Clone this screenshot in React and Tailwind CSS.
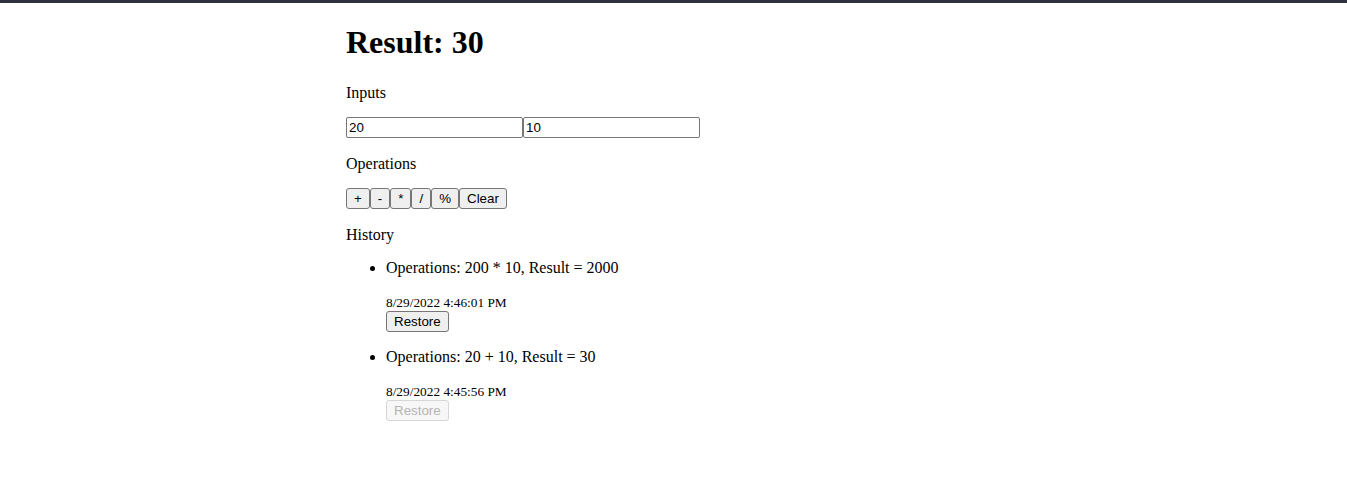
const history = [
  { a: 200, op: '*', b: 10, result: 2000, time: '8/29/2022 4:46:01 PM', current: false },
  { a: 20, op: '+', b: 10, result: 30, time: '8/29/2022 4:45:56 PM', current: true },
];

const ops = ['+', '-', '*', '/', '%', 'Clear'];

const btn =
  "font-['Liberation_Sans',Arial,sans-serif] text-[13.33px] leading-[15px] px-[7px] py-[2px] h-[21px] bg-[#efefef] border border-[#767676] rounded-[3px] text-black";

export default function App() {
  return (
    <div className="min-h-screen bg-white text-black font-['Liberation_Serif','Times_New_Roman',serif] text-base">
      <div className="h-[3px] bg-[#2d323e]" />
      <div className="w-[655px] mx-auto">
        <h1 className="text-[32px] font-bold leading-[37px] mt-[21px] mb-[23px]">Result: 30</h1>
        <p className="leading-[18px] mb-[15px]">Inputs</p>
        <div className="flex">
          <input
            type="text"
            defaultValue="20"
            className="w-[177px] h-[21px] border border-[#767676] rounded-[2px] px-[2px] text-[13.33px] font-['Liberation_Sans',Arial,sans-serif]"
          />
          <input
            type="text"
            defaultValue="10"
            className="w-[177px] h-[21px] border border-[#767676] rounded-[2px] px-[2px] text-[13.33px] font-['Liberation_Sans',Arial,sans-serif]"
          />
        </div>
        <p className="leading-[18px] mt-[17px] mb-[15px]">Operations</p>
        <div className="flex">
          {ops.map((o) => (
            <button key={o} className={btn}>
              {o}
            </button>
          ))}
        </div>
        <p className="leading-[18px] mt-[17px] mb-3">History</p>
        <ul className="list-disc pl-10">
          {history.map((h) => (
            <li key={h.time} className="mb-3">
              <p className="leading-[18px] mb-[19px]">
                Operations: {h.a} {h.op} {h.b}, Result = {h.result}
              </p>
              <div className="text-[13.33px] leading-[13px]">{h.time}</div>
              <button
                disabled={h.current}
                className={
                  h.current
                    ? "font-['Liberation_Sans',Arial,sans-serif] text-[13.33px] leading-[15px] px-[7px] py-[2px] h-[21px] bg-[#f7f7f7] border border-[#d6d6d6] rounded-[3px] text-[#b4b4b4]"
                    : btn
                }
              >
                Restore
              </button>
            </li>
          ))}
        </ul>
      </div>
    </div>
  );
}
